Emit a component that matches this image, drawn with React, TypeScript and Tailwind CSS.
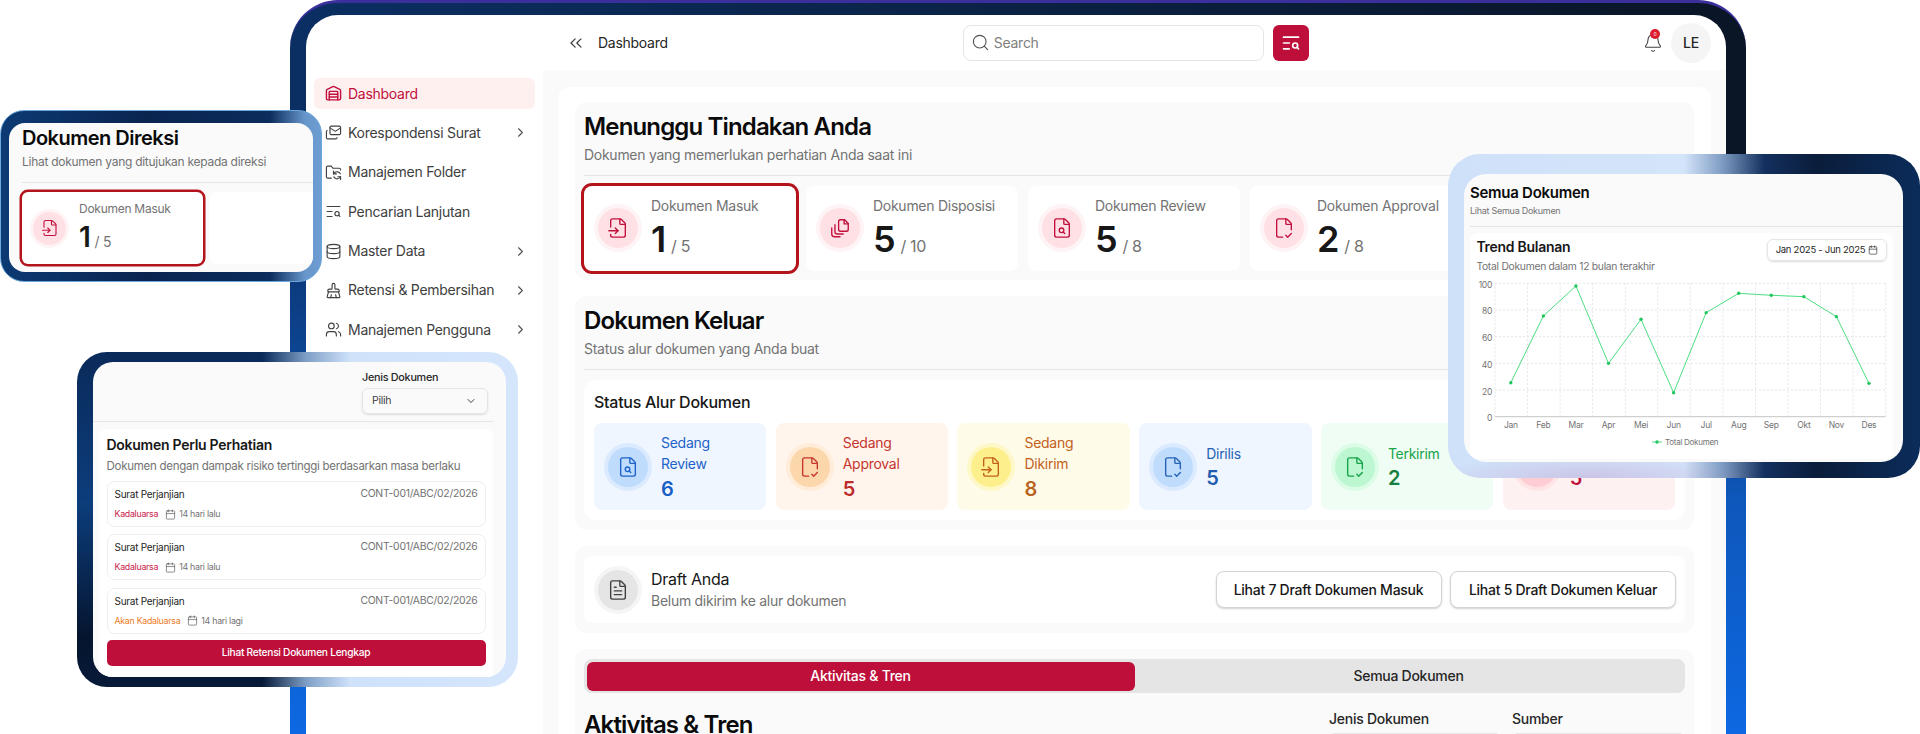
import {
  Bell,
  BrushCleaning,
  Calendar,
  ChevronDown,
  ChevronRight,
  ChevronsLeft,
  Database,
  FileCheck2,
  FileInput,
  FileSearch,
  FileText,
  FolderSync,
  Mails,
  Search,
  TextSearch,
  Users,
  Warehouse,
} from "lucide-react";
import type { ReactNode } from "react";

// lucide's Files doesn't have the two L strokes under the sheet
function StackedFiles({ size = 22, strokeWidth = 1.5 }: { size?: number; strokeWidth?: number }) {
  return (
    <svg width={size} height={size} viewBox="0 0 24 24" fill="none" stroke="currentColor" strokeWidth={strokeWidth} strokeLinecap="round" strokeLinejoin="round">
      <path d="M12.5 3h4.5l4 4v6.5a2 2 0 0 1-2 2h-6.500a2 2 0 0 1-2-2V5a2 2 0 0 1 2-2z" />
      <path d="M16.500 3v4.500H21" />
      <path d="M6.500 8.500v7.500a2.500 2.500 0 0 0 2.500 2.500h6.500" />
      <path d="M3 12v6.500A3 3 0 0 0 6 21.500h6" />
    </svg>
  );
}

const sideItems = [
  { label: "Dashboard", icon: Warehouse, active: true },
  { label: "Korespondensi Surat", icon: Mails, more: true },
  { label: "Manajemen Folder", icon: FolderSync },
  { label: "Pencarian Lanjutan", icon: TextSearch },
  { label: "Master Data", icon: Database, more: true },
  { label: "Retensi & Pembersihan", icon: BrushCleaning, more: true },
  { label: "Manajemen Pengguna", icon: Users, more: true },
];

const waiting = [
  { label: "Dokumen Masuk", value: 1, total: 5, icon: FileInput, selected: true },
  { label: "Dokumen Disposisi", value: 5, total: 10, icon: StackedFiles },
  { label: "Dokumen Review", value: 5, total: 8, icon: FileSearch },
  { label: "Dokumen Approval", value: 2, total: 8, icon: FileCheck2 },
  { label: "Dokumen Ditolak", value: 1, total: 4, icon: FileText },
];

const flow = [
  { lines: ["Sedang", "Review"], value: 6, icon: FileSearch, tile: "bg-[#eff6ff]", circle: "bg-[#bfdcfd] ring-[#dbeafe]", text: "text-[#1e63c9]", num: "text-[#1a5fc4]" },
  { lines: ["Sedang", "Approval"], value: 5, icon: FileCheck2, tile: "bg-[#fff5ed]", circle: "bg-[#fbd7ab] ring-[#ffecd9]", text: "text-[#c7352f]", num: "text-[#bd2c2c]" },
  { lines: ["Sedang", "Dikirim"], value: 8, icon: FileInput, tile: "bg-[#fffbe9]", circle: "bg-[#fdf08c] ring-[#fef8c8]", text: "text-[#c2611c]", num: "text-[#b9651f]" },
  { lines: ["Dirilis"], value: 5, icon: FileCheck2, tile: "bg-[#eff6ff]", circle: "bg-[#bfdcfd] ring-[#dbeafe]", text: "text-[#2563b5]", num: "text-[#1f5cb0]" },
  { lines: ["Terkirim"], value: 2, icon: FileCheck2, tile: "bg-[#f0fdf4]", circle: "bg-[#bcf7d1] ring-[#dcfce7]", text: "text-[#16a34a]", num: "text-[#15803d]" },
  { lines: ["Ditolak"], value: 5, icon: FileText, tile: "bg-[#fef1f1]", circle: "bg-[#fecdd3] ring-[#ffe4e6]", text: "text-[#be123c]", num: "text-[#be123c]" },
];

const attention = [
  { status: "Kadaluarsa", color: "text-[#c81e4a]", when: "14 hari lalu" },
  { status: "Kadaluarsa", color: "text-[#c81e4a]", when: "14 hari lalu" },
  { status: "Akan Kadaluarsa", color: "text-[#ea7c1e]", when: "14 hari lagi" },
];

const trend = [
  ["Jan", 25.5],
  ["Feb", 75.5],
  ["Mar", 98],
  ["Apr", 40],
  ["Mei", 73],
  ["Jun", 18],
  ["Jul", 78],
  ["Aug", 92.5],
  ["Sep", 91],
  ["Okt", 90],
  ["Nov", 75],
  ["Des", 25],
] as const;

function Sidebar() {
  return (
    <aside className="w-[237px] shrink-0 px-2 pt-[63px] flex flex-col gap-[8.4px]">
      {sideItems.map((item) => (
        <div
          key={item.label}
          className={`h-[31px] shrink-0 rounded-md flex items-center pl-[11px] pr-[7px] text-sm ${
            item.active ? "bg-[#fff0f0] text-[#c2103c]" : "text-[#404040]"
          }`}
        >
          <item.icon size={17} strokeWidth={item.active ? 2 : 1.6} className="mr-[6px] shrink-0" />
          <span className="flex-1 whitespace-nowrap">{item.label}</span>
          {item.more && <ChevronRight size={15} strokeWidth={1.8} className="text-[#525252]" />}
        </div>
      ))}
    </aside>
  );
}

function Header() {
  return (
    <header className="h-[55px] shrink-0 flex items-center pl-[23px] pr-[15px]">
      <ChevronsLeft size={20} strokeWidth={1.5} className="text-[#404040]" />
      <span className="ml-[12px] text-sm text-[#262626]">Dashboard</span>
      <div className="ml-[295px] w-[301px] h-9 rounded-lg border border-[#e5e5e5] flex items-center pl-[7px] gap-1 text-sm text-[#808080]">
        <Search size={19} strokeWidth={1.4} className="text-[#525252]" />
        Search
      </div>
      <button className="ml-[9px] w-9 h-9 rounded-md bg-[#be0f3a] flex items-center justify-center text-white">
        <TextSearch size={20} strokeWidth={2} />
      </button>
      <div className="ml-auto relative mr-[8px]">
        <Bell size={20} strokeWidth={1.3} className="text-[#404040]" />
        <span className="absolute -top-[4px] left-[7px] w-[10px] h-[10px] rounded-full bg-[#dc1c2e] text-white text-[5px] leading-[10px] text-center">0</span>
      </div>
      <div className="w-10 h-10 rounded-full bg-[#f5f5f5] flex items-center justify-center text-sm font-medium text-[#262626]">LE</div>
    </header>
  );
}

function SectionHead({ title, sub }: { title: string; sub: string }) {
  return (
    <>
      <h2 className="text-2xl font-semibold tracking-[-0.85px] text-[#0a0a0a] pt-[8.7px]">{title}</h2>
      <p className="mt-[2px] text-sm text-[#737373]">{sub}</p>
      <div className="mt-[10px] h-px bg-[#e5e5e5]" />
    </>
  );
}

function StatCard({ label, value, total, icon: Icon, selected }: (typeof waiting)[number]) {
  return (
    <div className={`h-[85px] rounded-lg bg-white flex items-center pl-[14px] ${selected ? "ring-[3px] ring-[#b5131c]" : ""}`}>
      <div className="w-10 h-10 shrink-0 rounded-full bg-[#ffe1e5] ring-4 ring-[#fff4f5] flex items-center justify-center text-[#c2103c]">
        <Icon size={22} strokeWidth={1.5} />
      </div>
      <div className="ml-[13px] pb-[1.500px]">
        <div className="text-sm text-[#737373] whitespace-nowrap">{label}</div>
        <div className="mt-[3px] flex items-baseline h-10">
          <span className="text-4xl leading-10 font-semibold text-[#171717]">{value}</span>
          <span className="ml-[5px] text-base text-[#737373]">/ {total}</span>
        </div>
      </div>
    </div>
  );
}

function FlowTile({ lines, value, icon: Icon, tile, circle, text, num }: (typeof flow)[number]) {
  return (
    <div className={`h-[87px] rounded-lg flex items-center pl-[14px] ${tile}`}>
      <div className={`w-10 h-10 shrink-0 rounded-full ring-4 flex items-center justify-center ${circle} ${text}`}>
        <Icon size={22} strokeWidth={1.5} />
      </div>
      <div className={`ml-[13px] text-sm leading-[20.700px] ${text}`}>
        {lines.map((line) => (
          <div key={line}>{line}</div>
        ))}
        <div className={`mt-[2px] text-xl leading-6 font-semibold ${num}`}>{value}</div>
      </div>
    </div>
  );
}

function Content() {
  return (
    <main className="flex-1 min-h-0 bg-[#fafafa] pl-[15px] pr-[15px] pt-[17px]">
      <div className="h-full rounded-t-xl bg-white px-[17px] pt-[15px] flex flex-col gap-4">
        <section className="h-[178px] shrink-0 rounded-xl bg-[#fafafa] pl-[9px] pr-[10px]">
          <SectionHead title="Menunggu Tindakan Anda" sub="Dokumen yang memerlukan perhatian Anda saat ini" />
          <div className="mt-[10px] grid grid-cols-5 gap-[10px]">
            {waiting.map((card) => (
              <StatCard key={card.label} {...card} />
            ))}
          </div>
        </section>

        <section className="h-[234px] shrink-0 rounded-xl bg-[#fafafa] pl-[9px] pr-[9px]">
          <SectionHead title="Dokumen Keluar" sub="Status alur dokumen yang Anda buat" />
          <div className="mt-[10px] rounded-xl bg-white px-[10px] pt-[10.700px] h-[140px]">
            <h3 className="text-base font-medium text-[#171717]">Status Alur Dokumen</h3>
            <div className="mt-[9px] grid grid-cols-6 gap-[9.400px]">
              {flow.map((tile) => (
                <FlowTile key={tile.lines.join(" ")} {...tile} />
              ))}
            </div>
          </div>
        </section>

        <section className="h-[87px] shrink-0 rounded-xl bg-[#fafafa] py-[10px] pl-[9px] pr-[9px]">
          <div className="h-[67px] rounded-lg bg-white flex items-center pl-[14px] pr-[9px]">
            <div className="w-10 h-10 shrink-0 rounded-full bg-[#e5e5e5] ring-4 ring-[#f5f5f5] flex items-center justify-center text-[#404040]">
              <FileText size={22} strokeWidth={1.5} />
            </div>
            <div className="ml-[13px] flex-1 -mt-[2px]">
              <div className="text-base leading-6 text-[#171717]">Draft Anda</div>
              <div className="text-sm text-[#737373]">Belum dikirim ke alur dokumen</div>
            </div>
            <div className="flex gap-[8.500px]">
              {["Lihat 7 Draft Dokumen Masuk", "Lihat 5 Draft Dokumen Keluar"].map((label) => (
                <button key={label} className="w-[226px] h-[37px] rounded-lg border border-[#d4d4d4] bg-white shadow-[0_1px_2px_rgba(0,0,0,0.18)] text-sm font-medium text-[#171717]">
                  {label}
                </button>
              ))}
            </div>
          </div>
        </section>

        <section className="flex-1 rounded-t-xl bg-[#fafafa] pl-[9px] pr-[9px] pt-[10px]">
          <div className="h-[34px] rounded-lg bg-[#e5e5e5] p-[2.500px] grid grid-cols-2 text-sm font-medium">
            <div className="rounded-md bg-[#be0f3a] text-white flex items-center justify-center">Aktivitas &amp; Tren</div>
            <div className="text-[#262626] flex items-center justify-center">Semua Dokumen</div>
          </div>
          <div className="mt-4 flex">
            <h2 className="text-2xl font-semibold tracking-[-0.85px] text-[#0a0a0a] flex-1">Aktivitas &amp; Tren</h2>
            <div className="w-[183px] pr-[11px] text-sm font-medium leading-5 text-[#262626]">
              Jenis Dokumen
              <div className="mt-1 h-9 rounded-md border border-[#e5e5e5]" />
            </div>
            <div className="w-[173px] text-sm font-medium leading-5 text-[#262626]">
              Sumber
              <div className="mt-1 h-9 rounded-md border border-[#e5e5e5]" />
            </div>
          </div>
        </section>
      </div>
    </main>
  );
}

function DireksiCard() {
  return (
    <div className="absolute left-0 top-[110px] w-[322px] h-[172px] rounded-[24px] border border-[#6ca8dc] pl-2 pr-2 pt-3 pb-[9px] bg-[linear-gradient(90deg,#0c3a73_0%,#0a2450_45%,#0b2c5c_84%,#6796cb_95%,#6d9dd2_100%)]">
      <div className="h-full rounded-2xl bg-[#fafafa] overflow-hidden">
        <h3 className="pl-[13px] pt-[1px] text-xl leading-7 font-semibold tracking-[-0.5px] text-[#0a0a0a]">Dokumen Direksi</h3>
        <p className="pl-[13px] mt-[2px] text-xs text-[#737373]">Lihat dokumen yang ditujukan kepada direksi</p>
        <div className="ml-[13px] mt-3 h-px bg-[#e5e5e5]" />
        <div className="mt-[9px] pl-[13px] flex gap-[7px]">
          <div className="w-[181px] h-[72px] rounded-md bg-white ring-[2.500px] ring-[#b5131c] flex items-center pl-[11px]">
            <div className="w-[33px] h-[33px] shrink-0 rounded-full bg-[#ffe1e5] ring-[3px] ring-[#fff4f5] flex items-center justify-center text-[#c2103c]">
              <FileInput size={18} strokeWidth={1.5} />
            </div>
            <div className="ml-[13px] self-start pt-[8.700px]">
              <div className="text-xs text-[#737373]">Dokumen Masuk</div>
              <div className="mt-[6px] flex items-baseline h-7">
                <span className="text-[28px] leading-7 font-semibold text-[#171717]">1</span>
                <span className="ml-1 text-sm text-[#737373]">/ 5</span>
              </div>
            </div>
          </div>
          <div className="flex-1 h-[72px] rounded-l-md bg-white" />
        </div>
      </div>
    </div>
  );
}

function AttentionCard() {
  return (
    <div className="absolute left-[77px] top-[352px] w-[441px] h-[335px] rounded-[30px] pl-4 pr-3 pt-[10px] pb-[10px] [background:linear-gradient(90deg,transparent_0%,transparent_42%,#7f9fc6_52%,#cfe2fa_62%,#d5e6fc_100%),linear-gradient(180deg,#0a2a5a_0%,#0c3d7c_45%,#05152f_85%,#071a38_100%)]">
      <div className="h-full rounded-[20px] bg-[#fafafa] overflow-hidden">
        <div className="pt-[9px] pl-[269px] w-[395px]">
          <div className="text-[10.800px] leading-[14px] font-medium text-[#262626]">Jenis Dokumen</div>
          <div className="mt-[3px] w-[126px] h-[26px] rounded-md border border-[#e5e5e5] shadow-[0_1px_2px_rgba(0,0,0,0.12)] flex items-center justify-between pl-[9px] pr-[10px] text-[10.500px] text-[#404040]">
            Pilih
            <ChevronDown size={12} strokeWidth={2} />
          </div>
        </div>
        <div className="mt-[7px] mr-[13px] h-px bg-[#e5e5e5]" />
        <div className="ml-[6px] mr-[13px] mt-[7px] h-[260px] rounded-lg bg-white px-[7.500px] pt-[6px]">
          <h3 className="text-[14px] leading-5 font-semibold text-[#171717]">Dokumen Perlu Perhatian</h3>
          <p className="mt-[3px] text-[11.500px] leading-4 text-[#737373] whitespace-nowrap">Dokumen dengan dampak risiko tertinggi berdasarkan masa berlaku</p>
          <div className="mt-[7px] flex flex-col gap-[7.300px]">
            {attention.map((row, i) => (
              <div key={i} className="h-[46px] rounded-lg border border-[#eeeeee] px-[7px] pt-[5px]">
                <div className="flex justify-between items-center leading-[14px] text-[#737373] text-[10.400px]">
                  <span className="text-[10px] text-[#262626]">Surat Perjanjian</span>
                  <span>CONT-001/ABC/02/2026</span>
                </div>
                <div className="mt-[6px] flex items-center text-[8.800px] leading-[14px]">
                  <span className={row.color}>{row.status}</span>
                  <Calendar size={11} strokeWidth={1.4} className="ml-[7px] text-[#525252]" />
                  <span className="ml-[3px] text-[#737373]">{row.when}</span>
                </div>
              </div>
            ))}
          </div>
          <button className="mt-[6px] w-full h-[26px] rounded-[5px] bg-[#be0f3a] text-[10.200px] font-medium text-white">Lihat Retensi Dokumen Lengkap</button>
        </div>
      </div>
    </div>
  );
}

function TrendChart() {
  const x = (i: number) => 40.8 + i * 32.56;
  const y = (v: number) => 141.7 - v * 1.334;
  const points = trend.map(([, v], i) => `${x(i)},${y(v)}`).join(" ");
  return (
    <svg width="422" height="180" className="block font-['Inter',sans-serif]">
      {[0, 20, 40, 60, 80, 100].map((tick) => (
        <g key={tick}>
          {tick > 0 && <line x1="25" x2="415.5" y1={y(tick)} y2={y(tick)} stroke="#e5e5e5" strokeDasharray="2 2" />}
          <text x="22" y={y(tick) + 4.5} textAnchor="end" fontSize="8.5" fill="#737373">{tick}</text>
        </g>
      ))}
      {Array.from({ length: 13 }, (_, i) => (
        <line key={i} x1={25 + i * 32.56} x2={25 + i * 32.56} y1={y(100)} y2={y(0)} stroke="#e5e5e5" strokeDasharray="2 2" />
      ))}
      <line x1="25" x2="415.5" y1={y(0)} y2={y(0)} stroke="#c4c4c4" />
      <polyline points={points} fill="none" stroke="#4ade80" strokeWidth="1" />
      {trend.map(([month, v], i) => (
        <g key={month}>
          <circle cx={x(i)} cy={y(v)} r="1.7" fill="#22c55e" />
          <text x={x(i)} y="152.5" textAnchor="middle" fontSize="8.5" fill="#737373">{month}</text>
        </g>
      ))}
      <line x1="182" x2="192" y1="167" y2="167" stroke="#4ade80" />
      <circle cx="187" cy="167" r="1.7" fill="#22c55e" />
      <text x="195" y="170" fontSize="8" fill="#737373">Total Dokumen</text>
    </svg>
  );
}

function TrendCard() {
  return (
    <div className="absolute left-[1448px] top-[154px] w-[472px] h-[324px] rounded-[32px] pl-4 pr-[17px] pt-5 pb-4 [background:radial-gradient(ellipse_160px_24px_at_30%_100%,rgba(190,150,200,0.4),transparent),linear-gradient(90deg,#cfe1f9_0%,#d4e4fa_50%,#7f9dc4_58%,#14305f_67%,#0a1d3b_78%,#0b2c5a_100%)]">
      <div className="h-full rounded-[22px] bg-[#fafafa] overflow-hidden">
        <h3 className="pl-[6px] pt-[7.700px] text-[15px] leading-[22px] font-semibold text-[#0a0a0a]">Semua Dokumen</h3>
        <p className="pl-[6px] mt-[1px] text-[9px] leading-3 text-[#737373]">Lihat Semua Dokumen</p>
        <div className="ml-[6px] mt-[9.600px] h-px bg-[#e5e5e5]" />
        <div className="ml-[6px] mr-[10px] mt-[6px] h-[226px] rounded-lg bg-white">
          <div className="h-[42px] flex justify-between pl-[6.400px] pr-[6px] pt-[6px]">
            <div>
              <div className="text-sm leading-4 font-semibold text-[#171717]">Trend Bulanan</div>
              <div className="mt-[4px] text-[10.300px] leading-[14px] text-[#737373]">Total Dokumen dalam 12 bulan terakhir</div>
            </div>
            <div className="w-[120px] h-[22px] rounded-md border border-[#e5e5e5] shadow-[0_1px_2px_rgba(0,0,0,0.14)] flex items-center justify-center gap-[3px] text-[9.500px] text-[#262626] whitespace-nowrap">
              Jan 2025 - Jun 2025
              <Calendar size={10} strokeWidth={1.5} />
            </div>
          </div>
          <TrendChart />
        </div>
      </div>
    </div>
  );
}

function Frame({ children }: { children: ReactNode }) {
  return (
    <div className="ml-[290px] w-[1456px] h-[734px] rounded-t-[48px] border-t-[3px] border-[#3a2f9b] pl-4 pr-5 pt-3 [background:linear-gradient(180deg,transparent_0%,transparent_25%,#0e57bb_68%,#0d68e2_100%),linear-gradient(90deg,#0b2f63,#0a1526)]">
      <div className="h-full rounded-t-[32px] bg-white overflow-hidden flex">{children}</div>
    </div>
  );
}

export default function App() {
  return (
    <div className="relative w-[1920px] h-[734px] overflow-hidden bg-white font-['Inter',sans-serif] tracking-[-0.27px]">
      <Frame>
        <Sidebar />
        <div className="flex-1 min-w-0 flex flex-col">
          <Header />
          <Content />
        </div>
      </Frame>
      <DireksiCard />
      <AttentionCard />
      <TrendCard />
    </div>
  );
}
